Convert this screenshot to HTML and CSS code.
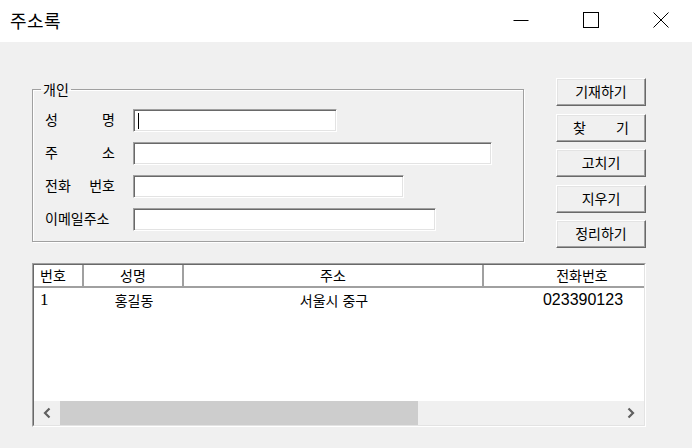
FILE: index.html
```html
<!DOCTYPE html>
<html lang="ko">
<head>
<meta charset="utf-8">
<title>주소록</title>
<link rel="stylesheet" href="styles.css">
</head>
<body>
<div class="window">
  <header class="titlebar">
    <span class="title">주소록</span>
    <div class="controls">
      <span class="ctl"><svg width="16" height="16" viewBox="0 0 16 16"><path d="M0.5 8.5H15.5" stroke="#000" stroke-width="1" fill="none"/></svg></span>
      <span class="ctl"><svg width="16" height="16" viewBox="0 0 16 16"><rect x="0.5" y="0.5" width="15" height="15" stroke="#000" stroke-width="1" fill="none"/></svg></span>
      <span class="ctl"><svg width="16" height="16" viewBox="0 0 16 16"><path d="M0.5 0.5L15.5 15.5M15.5 0.5L0.5 15.5" stroke="#000" stroke-width="1" fill="none"/></svg></span>
    </div>
  </header>
  <main class="client">
    <div class="top">
      <fieldset class="group">
        <legend>개인</legend>
        <div class="row">
          <span class="label"><span>성</span><span>명</span></span>
          <div class="field w-name"><span class="caret"></span></div>
        </div>
        <div class="row">
          <span class="label"><span>주</span><span>소</span></span>
          <div class="field w-addr"></div>
        </div>
        <div class="row">
          <span class="label"><span>전화</span><span>번호</span></span>
          <div class="field w-phone"></div>
        </div>
        <div class="row">
          <span class="label"><span>이메일주소</span></span>
          <div class="field w-mail"></div>
        </div>
      </fieldset>
      <div class="buttons">
        <button class="btn">기재하기</button>
        <button class="btn spread"><span>찾</span><span>기</span></button>
        <button class="btn">고치기</button>
        <button class="btn">지우기</button>
        <button class="btn">정리하기</button>
      </div>
    </div>
    <div class="listview">
      <div class="lv-inner">
        <div class="lv-clip">
          <div class="lv-head">
            <span class="cell c1 left">번호</span>
            <span class="cell c2">성명</span>
            <span class="cell c3">주소</span>
            <span class="cell c4">전화번호</span>
          </div>
          <div class="lv-body">
            <div class="lv-row">
              <span class="cell c1 left"><span class="num one">1</span></span>
              <span class="cell c2">홍길동</span>
              <span class="cell c3">서울시 중구</span>
              <span class="cell c4"><span class="num">023390123</span></span>
            </div>
          </div>
        </div>
        <div class="hscroll">
          <span class="arrow"><svg width="10" height="12" viewBox="0 0 10 12"><path d="M7.5 1.5L3 6L7.5 10.5" stroke="#606060" stroke-width="2.2" fill="none"/></svg></span>
          <div class="track"><div class="thumb"></div></div>
          <span class="arrow"><svg width="10" height="12" viewBox="0 0 10 12"><path d="M2.5 1.5L7 6L2.5 10.5" stroke="#606060" stroke-width="2.2" fill="none"/></svg></span>
        </div>
      </div>
    </div>
  </main>
</div>
</body>
</html>
```

FILE: styles.css
```css
* { box-sizing: border-box; }
html, body {
  margin: 0;
  padding: 0;
  width: 692px;
  height: 448px;
  overflow: hidden;
  background: #f0f0f0;
  font-family: "Noto Sans CJK KR", "Noto Sans", sans-serif;
  color: #000;
}
.window {
  width: 692px;
  height: 448px;
  display: flex;
  flex-direction: column;
}
.titlebar {
  height: 42px;
  background: #fff;
  display: flex;
  align-items: center;
  flex: none;
}
.title {
  padding-left: 10px;
  font-size: 18px;
  line-height: 20px;
  letter-spacing: 0.5px;
  margin-top: -2px;
}
.controls {
  margin-left: auto;
  display: flex;
  height: 42px;
}
.ctl {
  width: 70px;
  height: 42px;
  display: flex;
  align-items: center;
  justify-content: center;
  padding-left: 8px;
  padding-bottom: 3px;
}
.ctl svg { display: block; }

.client {
  flex: 1;
  padding: 36px 0 0 32px;
}
.top {
  display: flex;
  align-items: flex-start;
}
.group {
  margin: 3px 0 0 0;
  width: 492px;
  height: 161px;
  border: 1px solid #a0a0a0;
  box-shadow: 1px 1px 0 #fff, inset 1px 1px 0 #fff;
  padding: 12px 0 10px 12px;
  display: flex;
  flex-direction: column;
  gap: 10px;
  min-width: 0;
}
.group legend {
  font-size: 14px;
  line-height: 16px;
  padding: 0 2px;
  margin-left: -4px;
}
.row {
  display: flex;
  align-items: center;
  height: 23px;
}
.label {
  width: 70px;
  display: flex;
  justify-content: space-between;
  font-size: 14px;
  line-height: 16px;
  margin-right: 18px;
  margin-top: -3px;
}
.field {
  height: 23px;
  background: #fff;
  border-top: 1px solid #a0a0a0;
  border-left: 1px solid #a0a0a0;
  border-right: 1px solid #fff;
  border-bottom: 1px solid #fff;
  box-shadow: inset 1px 1px 0 #696969, inset -1px -1px 0 #e3e3e3;
  position: relative;
}
.w-name { width: 204px; }
.w-addr { width: 359px; }
.w-phone { width: 271px; }
.w-mail { width: 303px; }
.caret {
  position: absolute;
  left: 4px;
  top: 3px;
  width: 1px;
  height: 16px;
  background: #000;
}

.buttons {
  margin-left: 32px;
  display: flex;
  flex-direction: column;
  gap: 7.5px;
}
.btn {
  width: 90px;
  height: 28px;
  margin: 0;
  padding: 0 0 2px 0;
  background: #f0f0f0;
  font-family: "Noto Sans CJK KR", "Noto Sans", sans-serif;
  font-size: 14px;
  line-height: 16px;
  color: #000;
  border-top: 1px solid #fff;
  border-left: 1px solid #fff;
  border-right: 1px solid #696969;
  border-bottom: 1px solid #696969;
  box-shadow: inset -1px -1px 0 #a0a0a0, inset 1px 1px 0 #e3e3e3;
  display: flex;
  align-items: center;
  justify-content: center;
}
.btn.spread {
  justify-content: space-between;
  padding: 0 16px 2px 16px;
}

.listview {
  margin-top: 15px;
  width: 614px;
  height: 164px;
  border-top: 1px solid #a0a0a0;
  border-left: 1px solid #a0a0a0;
  border-right: 1px solid #fff;
  border-bottom: 1px solid #fff;
}
.lv-inner {
  height: 100%;
  border-top: 1px solid #696969;
  border-left: 1px solid #696969;
  border-right: 1px solid #e3e3e3;
  border-bottom: 1px solid #e3e3e3;
  background: #fff;
  display: flex;
  flex-direction: column;
}
.lv-clip {
  flex: 1;
  overflow: hidden;
}
.lv-head, .lv-row {
  display: flex;
  width: 654px;
}
.lv-head {
  height: 23px;
  border-bottom: 2px solid #a0a0a0;
  background: #fff;
  font-size: 14px;
  line-height: 16px;
}
.lv-head .cell {
  border-right: 2px solid #a0a0a0;
  padding-bottom: 1px;
}
.cell {
  flex: none;
  display: flex;
  align-items: center;
  justify-content: center;
  white-space: nowrap;
}
.cell.left {
  justify-content: flex-start;
  padding-left: 6px;
}
.c1 { width: 50px; }
.c2 { width: 100px; }
.c3 { width: 300px; }
.c4 { width: 198px; }
.lv-row {
  height: 24px;
  font-size: 14px;
  line-height: 16px;
}
.num {
  font-family: "Liberation Sans", sans-serif;
  font-size: 16px;
}
.num.one {
  font-family: "Liberation Serif", serif;
  font-size: 17px;
}
.hscroll {
  flex: none;
  height: 24px;
  background: #f0f0f0;
  display: flex;
}
.arrow {
  width: 26px;
  display: flex;
  align-items: center;
  justify-content: center;
}
.arrow svg { display: block; }
.track {
  flex: 1;
  display: flex;
}
.thumb {
  width: 358px;
  background: #cdcdcd;
}
```
